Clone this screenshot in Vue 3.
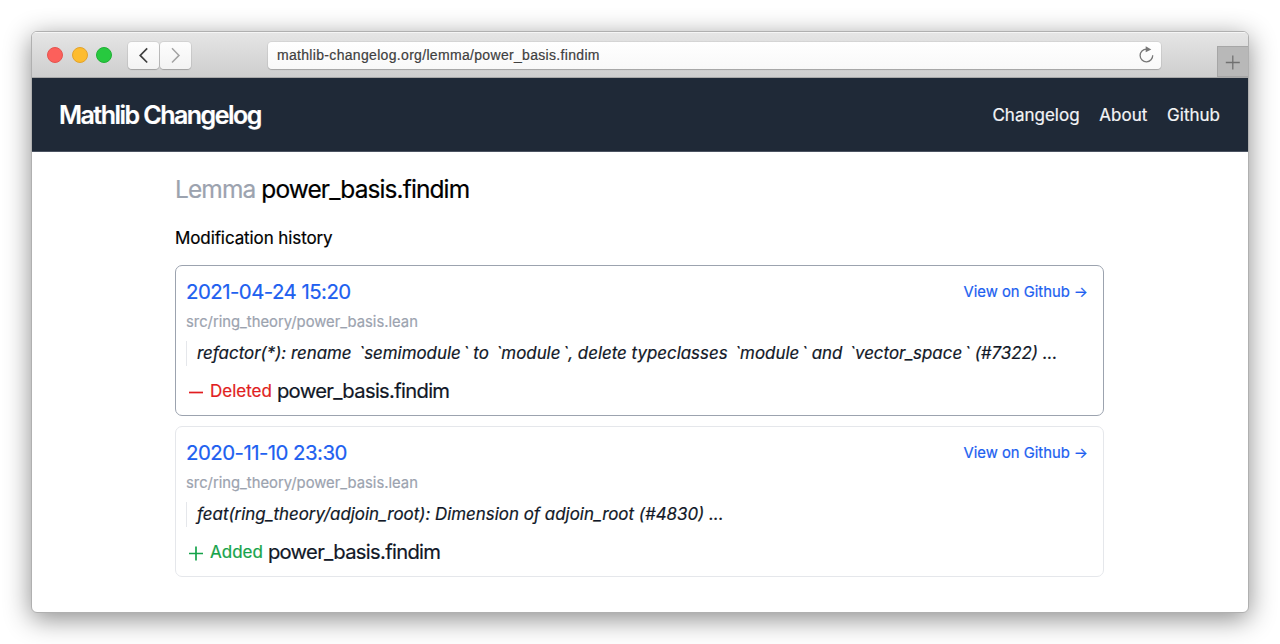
<script setup>
const navLinks = ['Changelog', 'About', 'Github']
const lemma = 'power_basis.findim'
const changes = [
  {
    date: '2021-04-24 15:20',
    file: 'src/ring_theory/power_basis.lean',
    message: 'refactor(*): rename `semimodule` to `module`, delete typeclasses `module` and `vector_space` (#7322) ...',
    kind: 'Deleted',
    active: true,
  },
  {
    date: '2020-11-10 23:30',
    file: 'src/ring_theory/power_basis.lean',
    message: 'feat(ring_theory/adjoin_root): Dimension of adjoin_root (#4830) ...',
    kind: 'Added',
    active: false,
  },
]

// Splits a commit message so that each backtick can carry its own spacing.
const pieces = (message) => message.split(/(`)/)
</script>

<template>
  <div class="desktop">
    <div class="window">
      <div class="toolbar">
        <div class="lights">
          <span class="light red"></span>
          <span class="light yellow"></span>
          <span class="light green"></span>
        </div>
        <div class="nav-buttons">
          <div class="nav-button">
            <svg width="31" height="27" viewBox="0 0 31 27"><path d="M19.2 6.3 12.2 13.4l7 7.1" fill="none" stroke="#404040" stroke-width="1.7" /></svg>
          </div>
          <div class="nav-button">
            <svg width="31" height="27" viewBox="0 0 31 27"><path d="M12 6.3l7 7.1-7 7.1" fill="none" stroke="#a3a3a3" stroke-width="1.5" /></svg>
          </div>
        </div>
        <div class="address">
          <span class="url">mathlib-changelog.org/lemma/power_basis.findim</span>
          <svg width="18" height="20" viewBox="0 0 18 20">
            <path d="M9.5 4.2A6.3 6.3 0 1 0 15.7 10.2" fill="none" stroke="#777" stroke-width="1.3" />
            <path d="M8.7 1.3v6l5.6-2.7z" fill="#777" />
          </svg>
        </div>
        <div class="new-tab">
          <svg width="30" height="30" viewBox="0 0 30 30"><path d="M14.8 8.5v14M7.8 15.5h14" stroke="#707070" stroke-width="1.3" /></svg>
        </div>
      </div>
      <header class="site-header">
        <span class="brand">Mathlib Changelog</span>
        <nav class="links">
          <a v-for="link in navLinks" :key="link">{{ link }}</a>
        </nav>
      </header>
      <main class="content">
        <h1><span class="muted">Lemma</span> <span>{{ lemma }}</span></h1>
        <h2>Modification history</h2>
        <article v-for="change in changes" :key="change.date" class="card" :class="{ active: change.active }">
          <div class="card-head">
            <a class="date">{{ change.date }}</a>
            <a class="view">View on Github →</a>
          </div>
          <div class="file">{{ change.file }}</div>
          <div class="message"><span v-for="(piece, i) in pieces(change.message)" :key="i" :class="{ tick: piece === '`' }">{{ piece }}</span></div>
          <div class="change">
            <svg :class="change.kind.toLowerCase()" width="20" height="20" viewBox="0 0 20 20">
              <path :d="change.kind === 'Added' ? 'M3 11.5h14M10 4.5v14' : 'M3 11.5h14'" stroke="currentColor" stroke-width="1.7" />
            </svg>
            <span class="kind" :class="change.kind.toLowerCase()">{{ change.kind }}</span>
            <span class="name">{{ lemma }}</span>
          </div>
        </article>
      </main>
    </div>
  </div>
</template>

<style>
body {
  background: #fff;
  overflow: hidden;
}
</style>

<style scoped>
.desktop {
  box-sizing: border-box;
  width: 1280px;
  height: 644px;
  padding: 31px;
  font-family: Inter, "Liberation Sans", sans-serif;
  -webkit-text-stroke: 0.2px currentColor;
  overflow: hidden;
}
.window {
  box-sizing: border-box;
  width: 1218px;
  height: 582px;
  border: 1px solid #b0b0b0;
  border-radius: 6px;
  overflow: hidden;
  background: #fff;
  box-shadow: 0 6px 27px rgba(0, 0, 0, 0.46);
}
.toolbar {
  box-sizing: border-box;
  display: flex;
  align-items: center;
  height: 46px;
  padding: 0 0 0 15px;
  border-top: 1px solid #f5f5f5;
  border-bottom: 1px solid #a8a8a8;
  background: linear-gradient(#e5e5e5, #cecece);
}
.lights {
  display: flex;
  gap: 8.7px;
}
.light {
  box-sizing: border-box;
  width: 16px;
  height: 16px;
  border-radius: 50%;
}
.red { background: #fc605b; border: 1px solid #e5544f; }
.yellow { background: #fdbc2f; border: 1px solid #e2a32d; }
.green { background: #27c93f; border: 1px solid #20b035; }
.nav-buttons {
  display: flex;
  gap: 1px;
  margin-left: 15.6px;
}
.nav-button {
  width: 31px;
  height: 27px;
  border-radius: 4px;
  background: linear-gradient(#fdfdfd, #f3f3f3);
  box-shadow: 0 0 0 1px rgba(0, 0, 0, 0.06), 0 1px 1px rgba(0, 0, 0, 0.18);
}
.nav-button svg { display: block; }
.address {
  box-sizing: border-box;
  display: flex;
  align-items: center;
  justify-content: space-between;
  width: 893px;
  height: 27px;
  margin-left: 77px;
  padding: 0 6px 0 9px;
  border-radius: 4px;
  background: linear-gradient(#fff, #f8f8f8);
  box-shadow: 0 0 0 1px rgba(0, 0, 0, 0.05), 0 1px 1px rgba(0, 0, 0, 0.18);
}
.url {
  color: #404040;
  font-family: "Liberation Sans", Arial, sans-serif;
  font-size: 14px;
  letter-spacing: 0.32px;
}
.new-tab {
  align-self: flex-end;
  box-sizing: border-box;
  width: 31px;
  height: 31px;
  margin-left: auto;
  border: 1px solid #a6a6a6;
  border-right: 0;
  background: #b8b8b8;
}
.new-tab svg { display: block; }
.site-header {
  box-sizing: border-box;
  display: flex;
  align-items: center;
  justify-content: space-between;
  height: 74px;
  padding: 1px 28px 0 27px;
  border-bottom: 1px solid #4b5361;
  background: #1f2937;
}
.brand {
  color: #fff;
  font-size: 25px;
  font-weight: 600;
  letter-spacing: -1.53px;
}
.links {
  display: flex;
  gap: 19.8px;
  color: #f3f4f6;
  font-size: 17px;
}
.content {
  width: 929px;
  margin-left: 143px;
  color: #000;
}
h1 {
  margin: 21px 0 0;
  font-size: 24.5px;
  font-weight: 400;
  line-height: 32px;
  letter-spacing: -0.9px;
}
.muted { color: #9ca3af; }
h2 {
  margin: 20px 0 13px;
  font-size: 17px;
  font-weight: 400;
  line-height: 27px;
  letter-spacing: -0.1px;
}
.card {
  box-sizing: border-box;
  height: 151px;
  margin-bottom: 10px;
  padding: 11px 15px 0 10px;
  border: 1px solid #e5e7eb;
  border-radius: 7px;
  color: #111827;
}
.card.active { border-color: #9ca3af; }
.card-head {
  display: flex;
  justify-content: space-between;
  line-height: 30px;
  color: #2060f0;
}
.date {
  font-size: 20.4px;
  letter-spacing: -0.52px;
}
.view { font-size: 14.8px; }
.file {
  color: #9ca3af;
  font-size: 14.8px;
  line-height: 30px;
}
.message {
  margin-top: 4px;
  padding-left: 10px;
  border-left: 1px solid #e5e7eb;
  font-size: 16.9px;
  font-style: italic;
  line-height: 25px;
  white-space: pre;
}
.tick { margin-left: 2.35px; }
.change {
  display: flex;
  align-items: center;
  margin-top: 10px;
  line-height: 30px;
}
.change svg { margin-right: 4px; }
.kind {
  margin-right: 5px;
  font-size: 17px;
}
.deleted { color: #e11d20; }
.added { color: #16a34a; }
.name {
  font-size: 20.2px;
  letter-spacing: -0.68px;
}
</style>
